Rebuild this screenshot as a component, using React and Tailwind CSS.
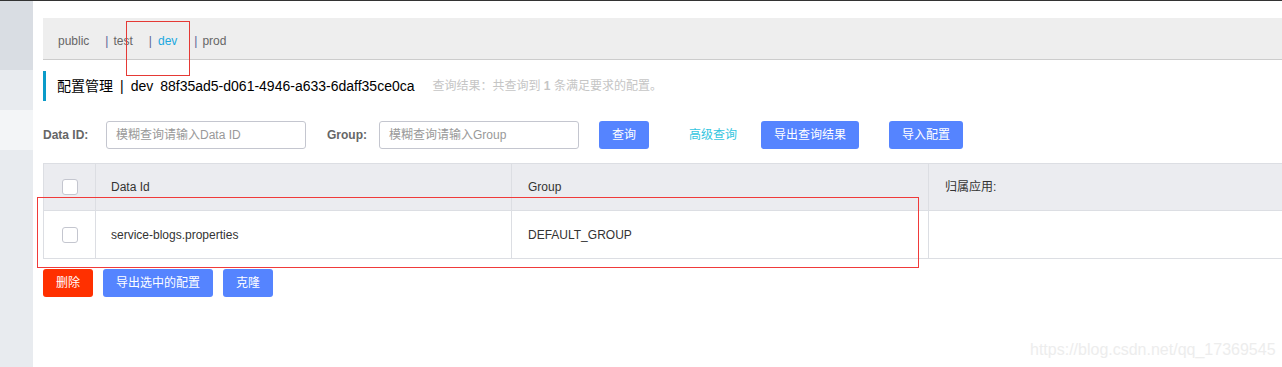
import React from "react";

const F = { fontFamily: '"Liberation Sans", "Noto Sans CJK SC", sans-serif' };

function Checkbox() {
  return <div className="w-[16px] h-[16px] rounded-[3px] border border-[#c4c6cf] bg-white" />;
}

function Btn({ children, red, w }) {
  return (
    <div
      className={`h-[28px] rounded-[3px] flex items-center justify-center text-white text-[12px] ${red ? "bg-[#ff3000]" : "bg-[#5584ff]"}`}
      style={{ width: w }}
    >
      {children}
    </div>
  );
}

export default function App() {
  return (
    <div className="relative w-[1282px] h-[367px] overflow-hidden bg-white border-t border-[#333]" style={F}>
      <div className="flex h-full">
        <div className="w-[33px] flex flex-col shrink-0">
          <div className="h-[69px] bg-[#d9dde3]" />
          <div className="h-[40px] bg-[#e8ebef]" />
          <div className="h-[40px] bg-[#f3f5f7]" />
          <div className="flex-1 bg-[#e8ebef]" />
        </div>
        <div className="flex-1 pl-[10px] pt-[17px] flex flex-col">
          <div className="h-[42px] bg-[#eeeeee] border-b border-[#cccccc] flex items-center pl-[15px] pt-[4px] text-[12px] text-[#666]">
            <span>public</span>
            <span className="ml-[16px] text-[#5b6394]">|</span>
            <span className="ml-[5px]">test</span>
            <span className="ml-[16px] text-[#5b6394]">|</span>
            <span className="ml-[6px] text-[#1aa8e0]">dev</span>
            <span className="ml-[17px] text-[#5b6394]">|</span>
            <span className="ml-[5px]">prod</span>
          </div>
          <div className="mt-[11px] h-[30px] border-l-[3px] border-[#0a9bc9] flex items-center pl-[11px]">
            <span className="text-[14px] text-black">配置管理</span>
            <span className="text-[14px] text-black ml-[7px]">|</span>
            <span className="text-[14px] text-black ml-[7px]">dev</span>
            <span className="text-[14px] text-black ml-[7px]">88f35ad5-d061-4946-a633-6daff35ce0ca</span>
            <span className="text-[12px] text-[#c5c5c5] ml-[18px]">
              查询结果：共查询到 <b className="font-bold">1</b> 条满足要求的配置。
            </span>
          </div>
          <div className="mt-[20px] flex items-center h-[28px] text-[12px]">
            <span className="font-bold text-[#666] w-[63px]">Data ID:</span>
            <div className="w-[200px] h-[28px] border border-[#c4c6cf] rounded-[3px] flex items-center pl-[9px] text-[#999]">
              模糊查询请输入Data ID
            </div>
            <span className="font-bold text-[#666] ml-[21px] w-[52px]">Group:</span>
            <div className="w-[200px] h-[28px] border border-[#c4c6cf] rounded-[3px] flex items-center pl-[9px] text-[#999]">
              模糊查询请输入Group
            </div>
            <div className="ml-[20px]"><Btn w={50}>查询</Btn></div>
            <span className="ml-[40px] text-[#33c5e0]">高级查询</span>
            <div className="ml-[24px]"><Btn w={98}>导出查询结果</Btn></div>
            <div className="ml-[30px]"><Btn w={74}>导入配置</Btn></div>
          </div>
          <div className="mt-[14px] border border-[#dcdee3] border-r-0 text-[12px] text-[#333]">
            <div className="flex h-[47px] bg-[#ebecf0] border-b border-[#dcdee3]">
              <div className="w-[52px] flex items-center justify-center border-r border-[#dcdee3]"><Checkbox /></div>
              <div className="w-[416px] flex items-center pl-[15px] border-r border-[#dcdee3]">Data Id</div>
              <div className="w-[417px] flex items-center pl-[16px] border-r border-[#dcdee3]">Group</div>
              <div className="flex-1 flex items-center pl-[16px]">归属应用:</div>
            </div>
            <div className="flex h-[47px] bg-white">
              <div className="w-[52px] flex items-center justify-center border-r border-[#dcdee3]"><Checkbox /></div>
              <div className="w-[416px] flex items-center pl-[15px] border-r border-[#dcdee3]">service-blogs.properties</div>
              <div className="w-[417px] flex items-center pl-[16px] border-r border-[#dcdee3]">DEFAULT_GROUP</div>
              <div className="flex-1" />
            </div>
          </div>
          <div className="mt-[10px] flex gap-[10px]">
            <Btn red w={50}>删除</Btn>
            <Btn w={110}>导出选中的配置</Btn>
            <Btn w={50}>克隆</Btn>
          </div>
        </div>
      </div>
      <div className="absolute left-[126px] top-[20px] w-[64px] h-[55px] border border-[#e53935]" />
      <div className="absolute left-[37px] top-[196px] w-[882px] h-[71px] border border-[#f03a3a]" />
      <div className="absolute left-[1030px] top-[337px] text-[16px] text-[#ededed]" style={{ fontFamily: '"Liberation Sans", Arial, sans-serif' }}>
        https://blog.csdn.net/qq_17369545
      </div>
    </div>
  );
}
